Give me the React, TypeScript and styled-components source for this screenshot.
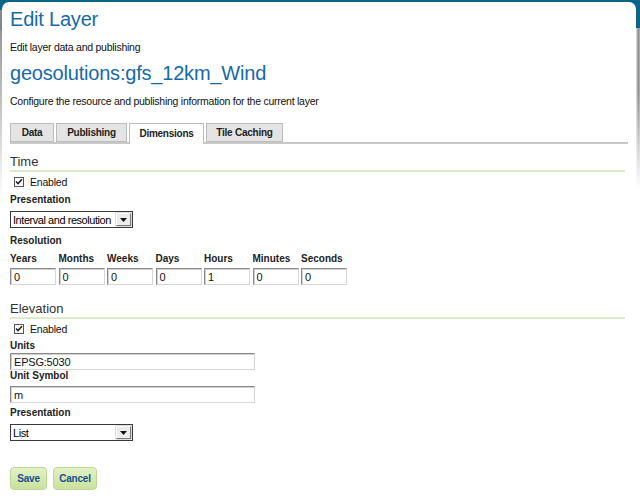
import React from "react";
import styled, { createGlobalStyle } from "styled-components";

const Global = createGlobalStyle`
  html, body { margin: 0; padding: 0; background: #fff; }
  body { font-family: "Liberation Sans", Arial, sans-serif; color: #222; }
  * { box-sizing: border-box; }
`;

const Shell = styled.div`
  position: relative;
  width: 640px;
  min-height: 496px;
  background: linear-gradient(to bottom, #0b6586 0, #0b6586 30px, #fff 30px);
  padding: 2px 4px 0 2px;
  &::before {
    content: "";
    position: absolute;
    left: 0;
    top: 10px;
    width: 2px;
    height: 190px;
    background: linear-gradient(to bottom, #8a8a8a, rgba(200, 200, 200, 0));
  }
  &::after {
    content: "";
    position: absolute;
    right: 0;
    top: 28px;
    width: 4px;
    height: 160px;
    background:
      linear-gradient(to bottom, rgba(255, 255, 255, 0) 40%, #fff),
      linear-gradient(to right, #e2e2e2, #8c8c8c 60%, #b8b8b8);
  }
`;

const Panel = styled.div`
  background: #fff;
  border-radius: 7px 7px 0 0;
  min-height: 494px;
  padding: 5px 11px 0 8px;
  display: flex;
  flex-direction: column;
`;

const Title = styled.h1<{ $gap?: number }>`
  margin: ${(p) => p.$gap ?? 0}px 0 0;
  font-size: 20px;
  line-height: 24px;
  font-weight: normal;
  color: #1769a8;
  letter-spacing: -0.2px;
`;

const Text = styled.p<{ $gap: number }>`
  margin: ${(p) => p.$gap}px 0 0;
  font-size: 10.5px;
  line-height: 14px;
  letter-spacing: -0.25px;
  color: #111;
`;

const TabBar = styled.div`
  margin: 14px -3px 0 0;
  display: flex;
  align-items: flex-end;
  gap: 2px;
  height: 22px;
  border-bottom: 2px solid #c8c8c8;
`;

const Tab = styled.div<{ $active?: boolean; $w: number }>`
  width: ${(p) => p.$w}px;
  height: ${(p) => (p.$active ? 21 : 19)}px;
  margin-bottom: ${(p) => (p.$active ? -2 : 0)}px;
  padding-bottom: ${(p) => (p.$active ? 2 : 0)}px;
  display: flex;
  align-items: center;
  justify-content: center;
  font-size: 10px;
  font-weight: bold;
  letter-spacing: -0.25px;
  color: #222;
  background: ${(p) => (p.$active ? "#fff" : "#e4e4e4")};
  border: 1px solid #bcbcbc;
  border-bottom: ${(p) => (p.$active ? "none" : "1px solid #bcbcbc")};
`;

const Heading = styled.h2<{ $gap: number }>`
  margin: ${(p) => p.$gap}px 0 0;
  font-size: 13px;
  line-height: 16px;
  font-weight: normal;
  color: #333;
  border-bottom: 2px solid #dfeacb;
`;

const CheckRow = styled.label`
  margin-top: 3px;
  padding-left: 4px;
  display: flex;
  align-items: center;
  gap: 6px;
  height: 14px;
  font-size: 10.5px;
  letter-spacing: -0.2px;
  color: #111;
`;

const Box = styled.span`
  width: 10px;
  height: 10px;
  border: 1px solid #555;
  background: #fff;
  display: inline-flex;
  align-items: center;
  justify-content: center;
`;

const Label = styled.div<{ $gap: number }>`
  margin-top: ${(p) => p.$gap}px;
  font-size: 10px;
  line-height: 12px;
  font-weight: bold;
  color: #222;
`;

const Select = styled.div<{ $gap: number }>`
  margin-top: ${(p) => p.$gap}px;
  width: 123px;
  height: 17px;
  border: 1px solid #3a3a3a;
  background: #fff;
  display: flex;
  align-items: center;
  justify-content: space-between;
  padding: 0 1px 0 2px;
  font-size: 11px;
  letter-spacing: -0.45px;
  color: #000;
`;

const Arrow = styled.span`
  width: 15px;
  height: 13px;
  background: #ececec;
  border: 1px solid;
  border-color: #fff #7a7a7a #7a7a7a #fff;
  box-shadow: 0 0 0 0.5px #bbb;
  display: flex;
  align-items: center;
  justify-content: center;
`;

const Grid = styled.div`
  margin-top: 6px;
  display: grid;
  grid-template-columns: repeat(7, 46px);
  column-gap: 2.5px;
  row-gap: 3px;
`;

const ColLabel = styled.div`
  font-size: 10px;
  line-height: 12px;
  font-weight: bold;
  color: #222;
`;

const Input = styled.div<{ $w?: number; $gap?: number }>`
  margin-top: ${(p) => p.$gap ?? 0}px;
  width: ${(p) => (p.$w ? `${p.$w}px` : "100%")};
  height: 17px;
  border: 1px solid;
  border-color: #8a8a8a #d6d6d6 #d6d6d6 #8a8a8a;
  box-shadow: inset 1px 1px 0 #d0d0d0;
  background: #fff;
  display: flex;
  align-items: center;
  padding-left: 3px;
  font-size: 11px;
  letter-spacing: -0.2px;
  color: #111;
`;

const Buttons = styled.div`
  margin-top: 26px;
  display: flex;
  gap: 6px;
`;

const Button = styled.button<{ $w: number }>`
  width: ${(p) => p.$w}px;
  height: 23px;
  padding: 0;
  border: 1px solid #bcd894;
  border-radius: 4px;
  background: linear-gradient(to bottom, #e4f1c6, #c9e19b);
  font-family: "Liberation Sans", Arial, sans-serif;
  font-size: 10px;
  font-weight: bold;
  letter-spacing: -0.2px;
  color: #17508e;
  cursor: pointer;
`;

const Check = () => (
  <svg width="8" height="8" viewBox="0 0 8 8">
    <path d="M1 3.5 L3 5.6 L7 1.3" fill="none" stroke="#222" strokeWidth="1.6" />
  </svg>
);

const Tri = () => (
  <svg width="7" height="4" viewBox="0 0 7 4">
    <path d="M0 0 H7 L3.5 4 Z" fill="#111" />
  </svg>
);

const cols: [string, string][] = [
  ["Years", "0"],
  ["Months", "0"],
  ["Weeks", "0"],
  ["Days", "0"],
  ["Hours", "1"],
  ["Minutes", "0"],
  ["Seconds", "0"],
];

export default function App() {
  return (
    <Shell>
      <Global />
      <Panel>
        <Title>Edit Layer</Title>
        <Text $gap={9}>Edit layer data and publishing</Text>
        <Title $gap={7}>geosolutions:gfs_12km_Wind</Title>
        <Text $gap={9}>Configure the resource and publishing information for the current layer</Text>

        <TabBar>
          <Tab $w={44}>Data</Tab>
          <Tab $w={71}>Publishing</Tab>
          <Tab $active $w={75}>Dimensions</Tab>
          <Tab $w={77}>Tile Caching</Tab>
        </TabBar>

        <Heading $gap={10}>Time</Heading>
        <CheckRow>
          <Box><Check /></Box>
          Enabled
        </CheckRow>
        <Label $gap={5}>Presentation</Label>
        <Select $gap={5}>
          <span>Interval and resolution</span>
          <Arrow><Tri /></Arrow>
        </Select>
        <Label $gap={7}>Resolution</Label>
        <Grid>
          {cols.map(([l]) => (
            <ColLabel key={l}>{l}</ColLabel>
          ))}
          {cols.map(([l, v]) => (
            <Input key={l + "i"}>{v}</Input>
          ))}
        </Grid>

        <Heading $gap={16}>Elevation</Heading>
        <CheckRow>
          <Box><Check /></Box>
          Enabled
        </CheckRow>
        <Label $gap={4}>Units</Label>
        <Input $w={245} $gap={1}>EPSG:5030</Input>
        <Label $gap={0}>Unit Symbol</Label>
        <Input $w={245} $gap={4}>m</Input>
        <Label $gap={4}>Presentation</Label>
        <Select $gap={5}>
          <span>List</span>
          <Arrow><Tri /></Arrow>
        </Select>

        <Buttons>
          <Button $w={37}>Save</Button>
          <Button $w={44}>Cancel</Button>
        </Buttons>
      </Panel>
    </Shell>
  );
}
